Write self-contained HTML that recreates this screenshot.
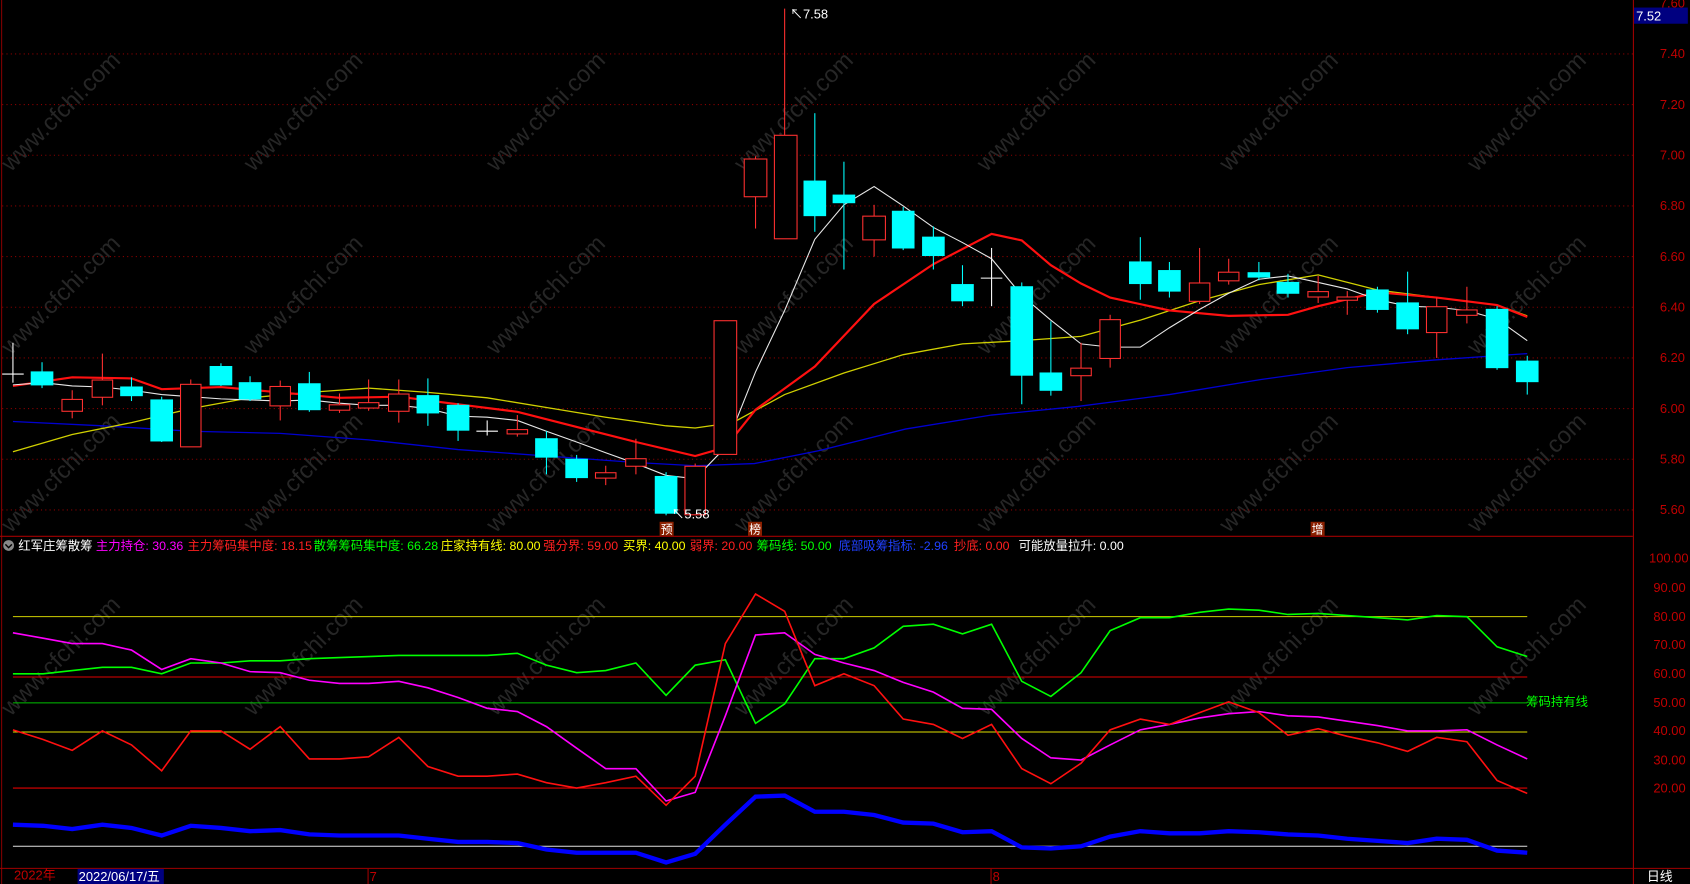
<!DOCTYPE html>
<html><head><meta charset="utf-8">
<style>
html,body{margin:0;padding:0;background:#000;overflow:hidden}
svg{display:block}
text{font-family:"Liberation Sans","Noto Sans CJK SC",sans-serif}
</style></head>
<body>
<svg width="1690" height="884" viewBox="0 0 1568 820" preserveAspectRatio="none" xmlns="http://www.w3.org/2000/svg">
<rect width="1568" height="820" fill="#000"/>
<!-- watermarks -->
<g fill="#2a2a2a" font-size="22" opacity="0.9">
<g transform="rotate(-45)">
</g>
</g>
<g fill="#262626" font-size="22">
<text transform="translate(10,160) rotate(-45)">www.cfchi.com</text>
<text transform="translate(235,160) rotate(-45)">www.cfchi.com</text>
<text transform="translate(460,160) rotate(-45)">www.cfchi.com</text>
<text transform="translate(690,160) rotate(-45)">www.cfchi.com</text>
<text transform="translate(915,160) rotate(-45)">www.cfchi.com</text>
<text transform="translate(1140,160) rotate(-45)">www.cfchi.com</text>
<text transform="translate(1370,160) rotate(-45)">www.cfchi.com</text>
<text transform="translate(10,330) rotate(-45)">www.cfchi.com</text>
<text transform="translate(235,330) rotate(-45)">www.cfchi.com</text>
<text transform="translate(460,330) rotate(-45)">www.cfchi.com</text>
<text transform="translate(690,330) rotate(-45)">www.cfchi.com</text>
<text transform="translate(915,330) rotate(-45)">www.cfchi.com</text>
<text transform="translate(1140,330) rotate(-45)">www.cfchi.com</text>
<text transform="translate(1370,330) rotate(-45)">www.cfchi.com</text>
<text transform="translate(10,495) rotate(-45)">www.cfchi.com</text>
<text transform="translate(235,495) rotate(-45)">www.cfchi.com</text>
<text transform="translate(460,495) rotate(-45)">www.cfchi.com</text>
<text transform="translate(690,495) rotate(-45)">www.cfchi.com</text>
<text transform="translate(915,495) rotate(-45)">www.cfchi.com</text>
<text transform="translate(1140,495) rotate(-45)">www.cfchi.com</text>
<text transform="translate(1370,495) rotate(-45)">www.cfchi.com</text>
<text transform="translate(10,665) rotate(-45)">www.cfchi.com</text>
<text transform="translate(235,665) rotate(-45)">www.cfchi.com</text>
<text transform="translate(460,665) rotate(-45)">www.cfchi.com</text>
<text transform="translate(690,665) rotate(-45)">www.cfchi.com</text>
<text transform="translate(915,665) rotate(-45)">www.cfchi.com</text>
<text transform="translate(1140,665) rotate(-45)">www.cfchi.com</text>
<text transform="translate(1370,665) rotate(-45)">www.cfchi.com</text>
</g>
<!-- frame -->
<line x1="1.5" y1="0" x2="1.5" y2="820" stroke="#800000"/>
<line x1="1515.5" y1="0" x2="1515.5" y2="820" stroke="#a00000"/>
<line x1="0" y1="497.5" x2="1515" y2="497.5" stroke="#a00000"/>
<line x1="0" y1="805.5" x2="1568" y2="805.5" stroke="#a00000"/>
<!-- price grid -->
<g stroke="#8a0000" stroke-dasharray="1,3">
<line x1="2" y1="50" x2="1515" y2="50"/><line x1="2" y1="97" x2="1515" y2="97"/>
<line x1="2" y1="144" x2="1515" y2="144"/><line x1="2" y1="191" x2="1515" y2="191"/>
<line x1="2" y1="238" x2="1515" y2="238"/><line x1="2" y1="285" x2="1515" y2="285"/>
<line x1="2" y1="332" x2="1515" y2="332"/><line x1="2" y1="379" x2="1515" y2="379"/>
<line x1="2" y1="426" x2="1515" y2="426"/><line x1="2" y1="473" x2="1515" y2="473"/>
</g>
<g fill="#c00000" font-size="12">
<text x="1540" y="7">7.60</text>
<text x="1540" y="54">7.40</text><text x="1540" y="101">7.20</text><text x="1540" y="148">7.00</text>
<text x="1540" y="195">6.80</text><text x="1540" y="242">6.60</text><text x="1540" y="289">6.40</text>
<text x="1540" y="336">6.20</text><text x="1540" y="383">6.00</text><text x="1540" y="430">5.80</text>
<text x="1540" y="477">5.60</text>
</g>
<rect x="1516" y="7" width="50" height="15" fill="#000080"/>
<text x="1518" y="19" fill="#fff" font-size="12">7.52</text>
<!-- MAs -->
<polyline fill="none" stroke="#0000d0" stroke-width="1.2" points="12,391 95,395 177,400 260,402 342,408 425,417 507,423 590,429 645,432 700,430 760,418 840,398 920,385 1000,377 1085,366 1170,352 1250,341 1330,334 1417,328"/>
<polyline fill="none" stroke="#d0d000" stroke-width="1.2" points="12,419 67,403 122,392 177,379 232,369 287,364 342,360 397,364 452,369 507,378 562,387 618,395 645,397 680,392 728,366 783,346 838,329 893,319 948,316 1003,312 1058,297 1113,279 1168,264 1223,255 1278,269 1333,276 1389,283 1417,293"/>
<polyline fill="none" stroke="#ff1010" stroke-width="2" points="12,358 67,350 122,351 150,361 205,359 260,364 315,369 370,368 425,375 480,382 535,396 590,410 645,423 673,415 701,380 756,340 811,282 866,245 920,217 948,223 975,246 1003,263 1030,276 1085,288 1140,293 1195,292 1223,284 1278,271 1333,276 1389,283 1417,294"/>
<polyline fill="none" stroke="#e8e8e8" stroke-width="1" points="12,357 40,355 67,358 95,359 122,362 150,366 177,368 205,370 232,371 260,372 287,371 315,374 342,376 370,376 397,379 425,386 452,387 480,390 507,400 535,410 562,420 590,430 618,441 645,444 673,415 701,345 728,288 756,222 783,190 811,173 838,191 866,211 893,225 920,240 948,274 975,297 1003,319 1030,322 1058,322 1085,304 1113,287 1140,272 1168,259 1195,256 1223,262 1250,268 1278,278 1306,284 1333,285 1361,288 1389,296 1417,316"/>
<!-- candles -->
<g id="c"></g>
<g stroke-width="1">
<!-- cyan filled -->
<g fill="#00ffff" stroke="#00ffff">
<line x1="39" y1="336" x2="39" y2="360"/><rect x="29" y="345" width="20" height="12"/>
<line x1="122" y1="350" x2="122" y2="372"/><rect x="112" y="359" width="20" height="8"/>
<line x1="150" y1="368" x2="150" y2="410"/><rect x="140" y="371" width="20" height="38"/>
<line x1="205" y1="337" x2="205" y2="358"/><rect x="195" y="340" width="20" height="17"/>
<line x1="232" y1="349" x2="232" y2="372"/><rect x="222" y="355" width="20" height="15"/>
<line x1="287" y1="345" x2="287" y2="382"/><rect x="277" y="356" width="20" height="24"/>
<line x1="397" y1="351" x2="397" y2="395"/><rect x="387" y="367" width="20" height="16"/>
<line x1="425" y1="374" x2="425" y2="409"/><rect x="415" y="376" width="20" height="23"/>
<line x1="507" y1="400" x2="507" y2="440"/><rect x="497" y="407" width="20" height="17"/>
<line x1="535" y1="422" x2="535" y2="447"/><rect x="525" y="426" width="20" height="17"/>
<line x1="618" y1="438" x2="618" y2="478"/><rect x="608" y="442" width="20" height="34"/>
<line x1="756" y1="105" x2="756" y2="215"/><rect x="746" y="168" width="20" height="32"/>
<line x1="783" y1="150" x2="783" y2="250"/><rect x="773" y="181" width="20" height="7"/>
<line x1="838" y1="192" x2="838" y2="232"/><rect x="828" y="196" width="20" height="34"/>
<line x1="866" y1="210" x2="866" y2="250"/><rect x="856" y="220" width="20" height="17"/>
<line x1="893" y1="246" x2="893" y2="284"/><rect x="883" y="264" width="20" height="15"/>
<line x1="948" y1="262" x2="948" y2="375"/><rect x="938" y="266" width="20" height="82"/>
<line x1="975" y1="298" x2="975" y2="367"/><rect x="965" y="346" width="20" height="16"/>
<line x1="1058" y1="220" x2="1058" y2="278"/><rect x="1048" y="243" width="20" height="20"/>
<line x1="1085" y1="243" x2="1085" y2="276"/><rect x="1075" y="251" width="20" height="19"/>
<line x1="1168" y1="243" x2="1168" y2="260"/><rect x="1158" y="253" width="20" height="4"/>
<line x1="1195" y1="254" x2="1195" y2="276"/><rect x="1185" y="262" width="20" height="10"/>
<line x1="1278" y1="266" x2="1278" y2="290"/><rect x="1268" y="269" width="20" height="18"/>
<line x1="1306" y1="252" x2="1306" y2="310"/><rect x="1296" y="281" width="20" height="24"/>
<line x1="1389" y1="284" x2="1389" y2="343"/><rect x="1379" y="287" width="20" height="54"/>
<line x1="1417" y1="330" x2="1417" y2="366"/><rect x="1407" y="335" width="20" height="19"/>
</g>
<!-- red hollow -->
<g fill="#000" stroke="#ff3030">
<line x1="67" y1="362" x2="67" y2="388"/><rect x="57.5" y="370.5" width="19" height="11"/>
<line x1="95" y1="328" x2="95" y2="376"/><rect x="85.5" y="352.5" width="19" height="16"/>
<line x1="177" y1="352" x2="177" y2="414"/><rect x="167.5" y="356.5" width="19" height="58"/>
<line x1="260" y1="353" x2="260" y2="390"/><rect x="250.5" y="358.5" width="19" height="18"/>
<line x1="315" y1="365" x2="315" y2="383"/><rect x="305.5" y="375.5" width="19" height="5"/>
<line x1="342" y1="352" x2="342" y2="381"/><rect x="332.5" y="373.5" width="19" height="5"/>
<line x1="370" y1="352" x2="370" y2="392"/><rect x="360.5" y="365.5" width="19" height="16"/>
<line x1="480" y1="385" x2="480" y2="405"/><rect x="470.5" y="398.5" width="19" height="4"/>
<line x1="562" y1="432" x2="562" y2="450"/><rect x="552.5" y="438.5" width="19" height="5"/>
<line x1="590" y1="407" x2="590" y2="440"/><rect x="580.5" y="425.5" width="19" height="7"/>
<line x1="645" y1="430" x2="645" y2="478"/><rect x="635.5" y="432.5" width="19" height="45"/>
<rect x="662.5" y="297.5" width="21" height="124"/>
<line x1="701" y1="145" x2="701" y2="212"/><rect x="690.5" y="147.5" width="21" height="35"/>
<line x1="728" y1="8" x2="728" y2="126"/><rect x="718.5" y="125.5" width="21" height="96"/>
<line x1="811" y1="190" x2="811" y2="238"/><rect x="800.5" y="200.5" width="21" height="22"/>
<line x1="1003" y1="318" x2="1003" y2="372"/><rect x="993.5" y="341.5" width="19" height="7"/>
<line x1="1030" y1="292" x2="1030" y2="341"/><rect x="1020.5" y="296.5" width="19" height="36"/>
<line x1="1113" y1="230" x2="1113" y2="282"/><rect x="1103.5" y="262.5" width="19" height="17"/>
<line x1="1140" y1="240" x2="1140" y2="264"/><rect x="1130.5" y="252.5" width="19" height="8"/>
<line x1="1223" y1="256" x2="1223" y2="281"/><rect x="1213.5" y="270.5" width="19" height="5"/>
<line x1="1250" y1="270" x2="1250" y2="292"/><rect x="1240.5" y="275.5" width="19" height="3"/>
<line x1="1333" y1="276" x2="1333" y2="332"/><rect x="1323.5" y="284.5" width="19" height="24"/>
<line x1="1361" y1="266" x2="1361" y2="300"/><rect x="1351.5" y="287.5" width="19" height="5"/>
</g>
<g stroke="#fff">
<line x1="12" y1="318" x2="12" y2="355"/><line x1="2" y1="347" x2="22" y2="347"/>
<line x1="452" y1="390" x2="452" y2="404"/><line x1="442" y1="400" x2="462" y2="400"/>
<line x1="920" y1="230" x2="920" y2="284"/><line x1="910" y1="258" x2="930" y2="258"/>
</g>
</g>
<text x="733" y="17" fill="#fff" font-size="12">↖7.58</text>
<text x="623" y="481" fill="#fff" font-size="12">↖5.58</text>
<g font-size="11" fill="#fff">
<rect x="612" y="484" width="13" height="13" fill="#8b2000"/><text x="613" y="495">预</text>
<rect x="694" y="484" width="13" height="13" fill="#8b2000"/><text x="695" y="495">榜</text>
<rect x="1216" y="484" width="13" height="13" fill="#8b2000"/><text x="1217" y="495">增</text>
</g>
<!-- indicator panel -->
<circle cx="8" cy="506" r="5" fill="#888"/><path d="M5,505 L8,508 L11,505" stroke="#000" fill="none" stroke-width="1.3"/>
<text y="510" font-size="11.5">
<tspan x="17" fill="#fff">红军庄筹散筹</tspan>
<tspan x="89" fill="#ff00ff">主力持仓: 30.36</tspan>
<tspan x="174" fill="#ff2020">主力筹码集中度: 18.15</tspan>
<tspan x="291" fill="#00ff00">散筹筹码集中度: 66.28</tspan>
<tspan x="409" fill="#ffff00">庄家持有线: 80.00</tspan>
<tspan x="504" fill="#ff2020">强分界: 59.00</tspan>
<tspan x="578" fill="#ffff00">买界: 40.00</tspan>
<tspan x="640" fill="#ff2020">弱界: 20.00</tspan>
<tspan x="702" fill="#00ff00">筹码线: 50.00</tspan>
<tspan x="778" fill="#2040ff">底部吸筹指标: -2.96</tspan>
<tspan x="885" fill="#ff2020">抄底: 0.00</tspan>
<tspan x="945" fill="#fff">可能放量拉升: 0.00</tspan>
</text>
<g fill="#c00000" font-size="12">
<text x="1530" y="522">100.00</text><text x="1534" y="549">90.00</text><text x="1534" y="576">80.00</text>
<text x="1534" y="602">70.00</text><text x="1534" y="629">60.00</text><text x="1534" y="656">50.00</text>
<text x="1534" y="682">40.00</text><text x="1534" y="709">30.00</text><text x="1534" y="735">20.00</text>
</g>
<line x1="12" y1="572" x2="1417" y2="572" stroke="#d0d000"/>
<line x1="12" y1="628" x2="1417" y2="628" stroke="#e00000"/>
<line x1="12" y1="652" x2="1417" y2="652" stroke="#00c000"/>
<line x1="12" y1="679" x2="1417" y2="679" stroke="#e0e000"/>
<line x1="12" y1="731" x2="1417" y2="731" stroke="#e00000"/>
<line x1="12" y1="785" x2="1417" y2="785" stroke="#e0e0e0"/>
<text x="1416" y="655" fill="#00ff00" font-size="11.5">筹码持有线</text>
<polyline fill="none" stroke="#00ff00" stroke-width="1.5" points="12,625 40,625 67,622 95,619 122,619 150,625 177,615 205,615 232,613 260,613 287,611 315,610 342,609 370,608 397,608 425,608 452,608 480,606 507,617 535,624 562,622 590,615 618,645 645,617 673,612 701,671 728,653 756,611 783,611 811,601 838,581 866,579 893,588 920,579 948,632 975,646 1003,624 1030,585 1058,573 1085,573 1113,568 1140,565 1168,566 1195,570 1223,569 1250,571 1278,573 1306,575 1333,571 1361,572 1389,600 1417,609"/>
<polyline fill="none" stroke="#ff00ff" stroke-width="1.5" points="12,587 40,592 67,597 95,597 122,603 150,621 177,611 205,615 232,623 260,624 287,631 315,634 342,634 370,632 397,638 425,647 452,657 480,660 507,674 535,694 562,713 590,713 618,743 645,735 673,664 701,589 728,587 756,607 783,615 811,622 838,633 866,642 893,657 920,658 948,685 975,703 1003,705 1030,691 1058,677 1085,672 1113,666 1140,662 1168,660 1195,664 1223,665 1250,669 1278,673 1306,678 1333,678 1361,677 1389,691 1417,704"/>
<polyline fill="none" stroke="#ff1010" stroke-width="1.5" points="12,677 40,686 67,696 95,678 122,691 150,715 177,678 205,678 232,695 260,674 287,704 315,704 342,702 370,684 397,711 425,720 452,720 480,718 507,726 535,731 562,726 590,720 618,747 645,720 673,597 701,551 728,567 756,636 783,625 811,636 838,667 866,672 893,685 920,672 948,713 975,727 1003,708 1030,677 1058,667 1085,672 1113,661 1140,651 1168,661 1195,682 1223,676 1250,683 1278,689 1306,697 1333,684 1361,688 1389,724 1417,736"/>
<polyline fill="none" stroke="#0000ff" stroke-width="4" points="12,765 40,766 67,769 95,765 122,768 150,775 177,766 205,768 232,771 260,770 287,774 315,775 342,775 370,775 397,778 425,781 452,781 480,782 507,788 535,791 562,791 590,791 618,800 645,792 673,765 701,739 728,738 756,753 783,753 811,756 838,763 866,764 893,772 920,771 948,786 975,787 1003,785 1030,776 1058,771 1085,773 1113,773 1140,771 1168,772 1195,774 1223,775 1250,778 1278,780 1306,782 1333,778 1361,779 1389,789 1417,791"/>
<!-- time axis -->
<text x="13" y="816" fill="#c00000" font-size="12">2022年</text>
<rect x="72" y="806" width="80" height="14" fill="#000080"/>
<text x="73" y="817" fill="#fff" font-size="12">2022/06/17/五</text>
<line x1="341.5" y1="806" x2="341.5" y2="820" stroke="#a00000"/>
<text x="343" y="817" fill="#c00000" font-size="12">7</text>
<line x1="919.5" y1="806" x2="919.5" y2="820" stroke="#a00000"/>
<text x="921" y="817" fill="#c00000" font-size="12">8</text>
<text x="1528" y="817" fill="#fff" font-size="12">日线</text>
</svg>
</body></html>
